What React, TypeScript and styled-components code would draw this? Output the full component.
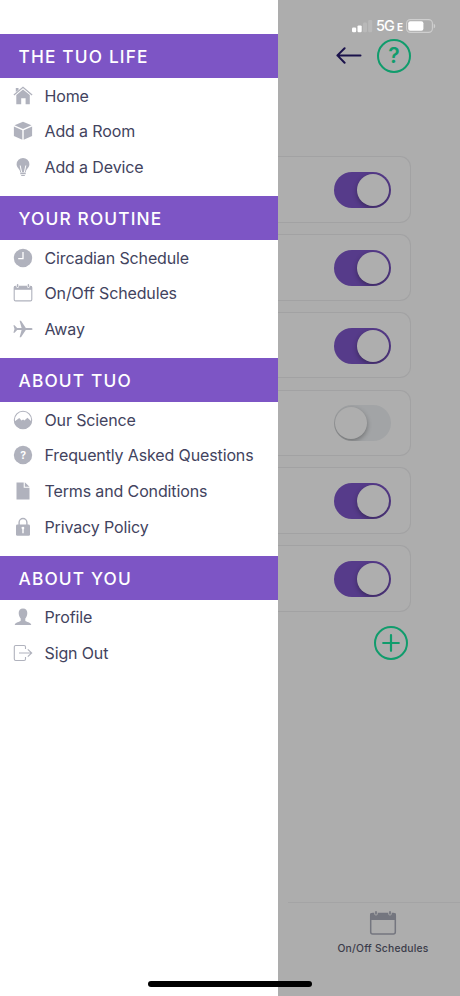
import React from "react";
import styled, { createGlobalStyle } from "styled-components";

const GlobalStyle = createGlobalStyle`
  * { box-sizing: border-box; }
  body { margin: 0; background: #adadad; font-family: Inter, "Liberation Sans", sans-serif; }
  svg { display: block; flex: none; }
`;

const Phone = styled.div`
  position: relative;
  display: flex;
  width: 460px;
  height: 996px;
  overflow: hidden;
  background: #adadad;
`;

const Drawer = styled.nav`
  flex: none;
  width: 278px;
  padding-top: 34px;
  background: #fff;
`;

const Section = styled.section`
  margin-bottom: 11.2px;
`;

const SectionTitle = styled.h2`
  display: flex;
  align-items: center;
  height: 44px;
  margin: 0;
  padding: 1px 0 0 18.5px;
  background: #7d55c5;
  color: #fff;
  font-size: 17.3px;
  font-weight: 450;
  letter-spacing: 1.16px;
  white-space: nowrap;
`;

const Item = styled.a`
  display: flex;
  align-items: center;
  gap: 12px;
  height: 35.6px;
  padding-left: 12.5px;
  color: #42435e;
  font-size: 16px;
  letter-spacing: -0.13px;
  white-space: nowrap;
`;

const Screen = styled.main`
  display: flex;
  flex-direction: column;
  flex: 1;
  min-width: 0;
`;

const StatusBar = styled.div`
  display: flex;
  align-items: center;
  justify-content: flex-end;
  height: 39px;
  padding: 13px 24px 0 0;
`;

const Network = styled.span`
  margin: 0 4px 0 3px;
  color: #fff;
  font-size: 14.5px;
  font-weight: 500;
  letter-spacing: -1px;
  line-height: 20px;
`;

const SmallE = styled.span`
  margin-left: 3px;
  font-size: 10px;
  font-weight: 700;
`;

const TopBar = styled.header`
  display: flex;
  align-items: center;
  justify-content: flex-end;
  gap: 15px;
  height: 34px;
  padding-right: 49px;
`;

const RoundButton = styled.button`
  display: flex;
  align-items: center;
  justify-content: center;
  width: 34px;
  height: 34px;
  padding: 0;
  border: 2px solid #109c6c;
  border-radius: 50%;
  background: transparent;
  color: #109c6c;
  font: 600 21px/30px Inter, sans-serif;
`;

const Cards = styled.div`
  display: flex;
  flex-direction: column;
  gap: 11.3px;
  margin-top: 83.3px;
`;

const Card = styled.div`
  display: flex;
  align-items: center;
  justify-content: flex-end;
  width: 133px;
  height: 66.5px;
  padding: 0.8px 19.5px 0 0;
  border: 1px solid #a2a2a3;
  border-left: 0;
  border-radius: 0 11px 11px 0;
  background: #aeaeae;
`;

const Toggle = styled.div<{ $on: boolean }>`
  display: flex;
  align-items: center;
  justify-content: ${(p) => (p.$on ? "flex-end" : "flex-start")};
  width: 57px;
  height: 36px;
  padding: 0 ${(p) => (p.$on ? 2 : 1)}px;
  border-radius: 18px;
  background: ${(p) => (p.$on ? "#563b8a" : "#a2a4a6")};
  overflow: hidden;
`;

const Knob = styled.div`
  width: 32px;
  height: 32px;
  border-radius: 50%;
  background: #aeaeae;
  box-shadow: 0 2px 5px rgba(0, 0, 0, 0.32);
`;

const AddRow = styled.div`
  display: flex;
  justify-content: flex-end;
  margin-top: 14.7px;
  padding-right: 52.5px;
`;

const TabBar = styled.footer`
  display: flex;
  flex-direction: column;
  align-items: center;
  gap: 5px;
  height: 94px;
  margin: auto 0 0 10px;
  padding: 7px 0 0 18px;
  border-top: 1px solid #a4a4a5;
  color: #3b3c4a;
  font-size: 10.3px;
  font-weight: 450;
  letter-spacing: 0.22px;
  line-height: 14px;
`;

const HomeIndicator = styled.div`
  position: absolute;
  left: 148px;
  bottom: 9px;
  width: 164px;
  height: 6px;
  border-radius: 3px;
  background: #000;
`;

const C = "#b0b2bd";

type IconName =
  | "home" | "box" | "bulb" | "clock" | "calendar" | "plane"
  | "science" | "question" | "file" | "lock" | "person" | "exit";

const drawings: Record<IconName, React.ReactNode> = {
  home: (
    <>
      <path d="M3.3 9.1 10 3.4l6.8 5.7v9.2h-4.2v-6H8.2v6H3.3Z" fill={C} />
      <path d="M.9 9 10 1.3 19.1 9" fill="none" stroke={C} strokeWidth="1.3" />
      <path d="M2.8 1.9h2.7v2L2.8 6.1Z" fill={C} />
    </>
  ),
  box: (
    <>
      <path d="m10 .8 8.5 3.5L10 8 1.5 4.3Z" fill={C} />
      <path d="m.9 5.5 8.4 3.7v9.5L.9 15Z" fill={C} />
      <path d="m19.1 5.5-8.4 3.7v9.5l8.4-3.7Z" fill={C} />
    </>
  ),
  bulb: (
    <>
      <path d="M10 1a6.4 6.4 0 0 1 6.4 6.3c0 3.7-3.3 4.4-3.6 8.1H7.2c-.3-3.7-3.6-4.4-3.6-8.1A6.4 6.4 0 0 1 10 1Z" fill={C} />
      <path d="M8.6 15.2 7.2 8.5M11.4 15.2l1.4-6.7" fill="none" stroke="#fff" strokeWidth="1" />
      <path d="M7.3 16.7h5.4M8.2 18.5h3.6" stroke={C} strokeWidth="1.2" />
    </>
  ),
  clock: (
    <>
      <circle cx="10" cy="10" r="9.2" fill={C} />
      <path d="M10 4v6.7H5.2" fill="none" stroke="#fff" strokeWidth="1.3" />
    </>
  ),
  calendar: (
    <>
      <rect x="1.2" y="3.2" width="17.6" height="14.7" rx="1.4" fill="none" stroke={C} strokeWidth="1.1" />
      <path d="M1 3.1h18v3.7H1Z" fill={C} />
      <path d="M4.6 1.8v1.8M15.4 1.8v1.8" stroke="#fff" strokeWidth="2.6" strokeLinecap="round" />
      <path d="M4.6 1.7v1.8M15.4 1.7v1.8" stroke={C} strokeWidth="1.5" strokeLinecap="round" />
    </>
  ),
  plane: (
    <path d="M.4 6.2h1.2L4.1 9l4.5-.1-2-7.2H8l4.8 7.2h4.7c1.3 0 2.1.5 2.1 1.1s-.8 1.1-2.1 1.1h-4.7L8 18.3H6.6l2-7.2-4.5-.1-2.5 2.8H.4L1.5 10Z" fill={C} />
  ),
  science: (
    <>
      <circle cx="10" cy="10" r="8.7" fill="none" stroke={C} strokeWidth="1.1" />
      <path d="M1.2 11.8 6.3 8l2.2 2.4 1.6-1 1.3 1.2 3-2.8 4.4 4A9 9 0 0 1 1.2 11.8Z" fill={C} />
    </>
  ),
  question: (
    <>
      <circle cx="10" cy="10" r="9.2" fill={C} />
      <text x="10" y="13.9" textAnchor="middle" fontSize="10.5" fontWeight="700" fill="#fff" fontFamily="Inter, sans-serif">?</text>
    </>
  ),
  file: (
    <>
      <path d="M3.5 1.5h7.2v5.3h5.8v11.6h-13Z" fill={C} />
      <path d="m11.8 1.3 4.7 4.5h-4.7Z" fill={C} />
    </>
  ),
  lock: (
    <>
      <path d="M6.1 8V5.4a3.9 3.9 0 0 1 7.8 0V8" fill="none" stroke={C} strokeWidth="1.4" />
      <rect x="3" y="7.6" width="14" height="11.2" rx="1.4" fill={C} />
      <path d="M8.7 10.8H10v5.4M10 10.2v2.4" fill="none" stroke="#fff" strokeWidth="1.4" />
      <circle cx="10" cy="11.1" r="1.3" fill="#fff" />
    </>
  ),
  person: (
    <path d="M10 1.4c2.9 0 4.3 2 4.3 4.7 0 2.6-1 4.3-2 5.3v2.4c1 1.4 5.5 1.3 6 4.1H1.7c.5-2.8 5-2.7 6-4.1v-2.4c-1-1-2-2.7-2-5.3 0-2.7 1.4-4.7 4.3-4.7Z" fill={C} />
  ),
  exit: (
    <path d="M12.5 6V3.9c0-.9-.6-1.4-1.4-1.4H2.7c-.8 0-1.4.6-1.4 1.4v12.2c0 .8.6 1.4 1.4 1.4h8.4c.8 0 1.4-.5 1.4-1.4V14M6 10h12.5M14.8 6.3l3.9 3.7-3.9 3.7" fill="none" stroke={C} strokeWidth="1.1" />
  ),
};

const Icon = ({ name }: { name: IconName }) => (
  <svg width="20" height="20" viewBox="0 0 20 20">{drawings[name]}</svg>
);

const menu: { title: string; items: [IconName, string][] }[] = [
  { title: "THE TUO LIFE", items: [["home", "Home"], ["box", "Add a Room"], ["bulb", "Add a Device"]] },
  { title: "YOUR ROUTINE", items: [["clock", "Circadian Schedule"], ["calendar", "On/Off Schedules"], ["plane", "Away"]] },
  {
    title: "ABOUT TUO",
    items: [["science", "Our Science"], ["question", "Frequently Asked Questions"], ["file", "Terms and Conditions"], ["lock", "Privacy Policy"]],
  },
  { title: "ABOUT YOU", items: [["person", "Profile"], ["exit", "Sign Out"]] },
];

const toggles = [true, true, true, false, true, true];

export default function App() {
  return (
    <Phone>
      <GlobalStyle />
      <Drawer>
        {menu.map((section) => (
          <Section key={section.title}>
            <SectionTitle>{section.title}</SectionTitle>
            {section.items.map(([icon, label]) => (
              <Item key={label}>
                <Icon name={icon} />
                <span>{label}</span>
              </Item>
            ))}
          </Section>
        ))}
      </Drawer>
      <Screen>
        <StatusBar>
          <svg width="21" height="14" viewBox="0 0 21 14">
            <rect x="0" y="8.6" width="4.2" height="4.7" rx="1.2" fill="#fff" />
            <rect x="5.5" y="6.4" width="4.2" height="6.9" rx="1.2" fill="#fff" />
            <rect x="11" y="3.6" width="4" height="9.7" rx="1.2" fill="#b9b9b9" />
            <rect x="16.2" y="1" width="4" height="12.3" rx="1.2" fill="#b9b9b9" />
          </svg>
          <Network>5G<SmallE>E</SmallE></Network>
          <svg width="30" height="14" viewBox="0 0 30 14">
            <rect x=".6" y=".6" width="25.8" height="12.8" rx="3.8" fill="none" stroke="#cfcfcf" strokeWidth="1.1" />
            <rect x="2.2" y="2.3" width="15.2" height="9.4" rx="2" fill="#fff" />
            <path d="M27.7 4.7c2 .7 2 3.9 0 4.6Z" fill="#cfcfcf" />
          </svg>
        </StatusBar>
        <TopBar>
          <svg width="26" height="18" viewBox="0 0 26 18" fill="none" stroke="#1a124b" strokeWidth="2" strokeLinecap="round" strokeLinejoin="round">
            <path d="M24.5 8.4H1.4M8.6 1.2 1.4 8.4l7.2 7.3" />
          </svg>
          <RoundButton>?</RoundButton>
        </TopBar>
        <Cards>
          {toggles.map((on, i) => (
            <Card key={i}>
              <Toggle $on={on}><Knob /></Toggle>
            </Card>
          ))}
        </Cards>
        <AddRow>
          <RoundButton aria-label="Add">
            <svg width="18" height="18" viewBox="0 0 18 18" stroke="#109c6c" strokeWidth="2.2" strokeLinecap="round">
              <path d="M9 1.2v15.6M1.2 9h15.6" />
            </svg>
          </RoundButton>
        </AddRow>
        <TabBar>
          <svg width="28" height="26" viewBox="0 0 28 26">
            <rect x="1.7" y="3.5" width="24.6" height="20.6" rx="2" fill="none" stroke="#74767f" strokeWidth="1.5" />
            <path d="M1.2 3.4h25.6V10H1.2Z" fill="#74767f" />
            <path d="M7 2.4v1.4M21 2.4v1.4" stroke="#adadad" strokeWidth="3.4" strokeLinecap="round" />
            <path d="M7 1.8v2M21 1.8v2" stroke="#74767f" strokeWidth="1.7" strokeLinecap="round" />
          </svg>
          On/Off Schedules
        </TabBar>
      </Screen>
      <HomeIndicator />
    </Phone>
  );
}
